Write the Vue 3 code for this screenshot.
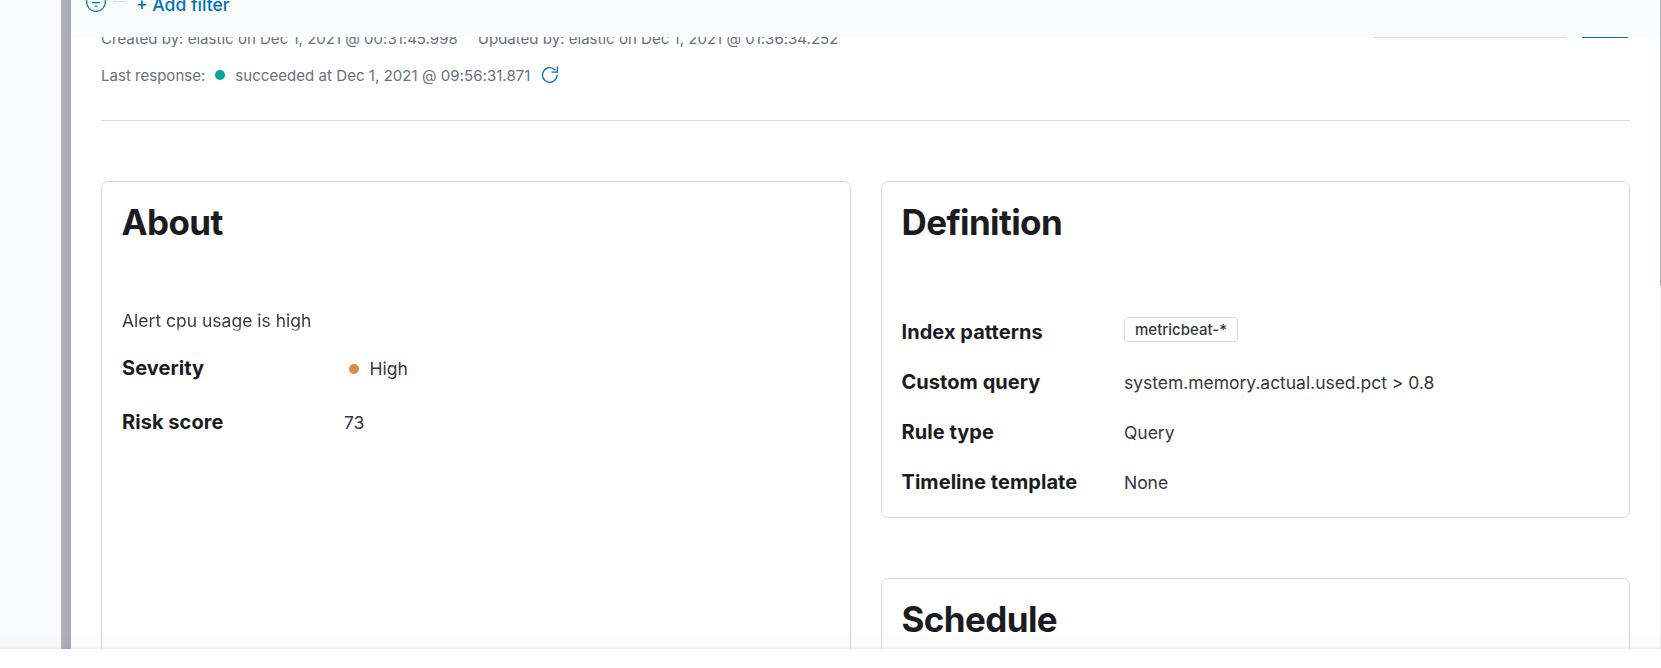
<script setup>
const about = [
  { label: 'Severity', value: 'High', dot: true },
  { label: 'Risk score', value: '73' },
]
const definition = [
  { label: 'Index patterns', value: 'metricbeat-*', badge: true },
  { label: 'Custom query', value: 'system.memory.actual.used.pct > 0.8' },
  { label: 'Rule type', value: 'Query' },
  { label: 'Timeline template', value: 'None' },
]
</script>

<template>
  <div class="app">
    <div class="body">
      <aside class="side"></aside>
      <div class="strip"></div>
      <main class="main">
        <header class="filters">
          <svg class="filter-icon" width="20" height="20" viewBox="0 0 20 20" fill="none" stroke="#0071c2" stroke-width="1.25">
            <circle cx="10" cy="10" r="9.4" />
            <path d="M4 6.8h12M6 10.5h8M8.8 14.2h2.6" />
          </svg>
          <span class="dash"></span>
          <span class="add">+ Add filter</span>
        </header>
        <section class="content">
          <div class="meta">
            <span>Created by: elastic on Dec 1, 2021 @ 00:31:45.998</span>
            <span>Updated by: elastic on Dec 1, 2021 @ 01:36:34.252</span>
            <div class="buttons">
              <i class="btn light"></i>
              <i class="btn solid"></i>
            </div>
          </div>
          <div class="status">
            <span>Last response:</span>
            <i class="dot green"></i>
            <span class="result">succeeded at Dec 1, 2021 @ 09:56:31.871</span>
            <svg class="refresh" width="18" height="18" viewBox="0 0 18 18" fill="none" stroke="#0071c2" stroke-width="1.3">
              <path d="M16.1 9A7.3 7.3 0 1 1 14.3 4.2" />
              <path d="M16.3 .5v5.7h-5.6" />
            </svg>
          </div>
          <hr class="rule" />
          <div class="columns">
            <article class="card about">
              <h3>About</h3>
              <p class="desc">Alert cpu usage is high</p>
              <dl>
                <div v-for="r in about" :key="r.label" class="row">
                  <dt>{{ r.label }}</dt>
                  <dd :class="{ health: r.dot }"><i v-if="r.dot" class="dot orange"></i>{{ r.value }}</dd>
                </div>
              </dl>
            </article>
            <div class="stack">
              <article class="card definition">
                <h3>Definition</h3>
                <dl>
                  <div v-for="r in definition" :key="r.label" class="row">
                    <dt>{{ r.label }}</dt>
                    <dd v-if="r.badge" class="badge">{{ r.value }}</dd>
                    <dd v-else>{{ r.value }}</dd>
                  </div>
                </dl>
              </article>
              <article class="card schedule">
                <h3>Schedule</h3>
              </article>
            </div>
          </div>
        </section>
      </main>
      <div class="scroll"><div class="thumb"></div></div>
      <div class="fade"></div>
    </div>
    <footer class="bottom"></footer>
  </div>
</template>

<style>
html, body { margin: 0; overflow: hidden; }
</style>

<style scoped>
.app {
  width: 100vw;
  height: 668px;
  overflow: hidden;
  background: #fff;
  color: #343741;
  font-family: Inter, sans-serif;
  font-size: 17.5px;
}
.body { position: relative; display: flex; height: 649px; overflow: hidden; }
.side { width: 61px; background: #fafbfd; flex: none; }
.strip { width: 10px; background: linear-gradient(90deg, #adb3bb, #a9acb6); flex: none; }
.main { flex: 1; min-width: 0; }
.scroll { width: 1px; background: #f0f1f3; flex: none; }
.thumb { height: 286px; background: #abadb9; }
.fade {
  position: absolute;
  inset: auto 0 0 0;
  height: 20px;
  background: linear-gradient(rgba(0, 0, 0, 0), rgba(0, 0, 0, .018) 90%, rgba(0, 0, 0, .07));
}
.bottom { height: 19px; background: #fff; }

.filters {
  position: relative;
  z-index: 1;
  display: flex;
  align-items: flex-start;
  height: 37px;
  padding-left: 15px;
  box-sizing: border-box;
  background: #fafbfd;
}
.filter-icon { margin-top: -8px; flex: none; }
.dash { width: 13px; height: 1px; margin: 1px 0 0 7px; background: #d3dae6; }
.add { margin: -8px 0 0 10px; line-height: 26px; font-weight: 500; color: #0071c2; white-space: nowrap; }

.content { padding: 0 30px; }
.meta, .status {
  display: flex;
  align-items: center;
  font-size: 15px;
  line-height: 22px;
  letter-spacing: .02px;
  color: #69707d;
  white-space: nowrap;
}
.meta { height: 22px; margin-top: -9px; gap: 20px; }
.buttons { display: flex; gap: 16px; margin: 0 2px 0 auto; align-self: flex-start; height: 10px; }
.btn { height: 10px; }
.light { width: 193px; background: #cce3f2; }
.solid { width: 46px; background: #0071c2; }
.status { height: 22px; margin-top: 15px; }
.dot { display: inline-block; width: 10px; height: 10px; border-radius: 50%; flex: none; }
.green { margin: -2px 10px 0; background: #00a69b; }
.result { letter-spacing: .05px; }
.refresh { margin: -3px 0 0 11px; }
.rule { height: 1px; margin: 33px 0 60px; border: 0; background: #d3dae6; }

.columns { display: grid; grid-template-columns: 750px 749px; column-gap: 30px; }
.card {
  box-sizing: border-box;
  padding: 20px;
  border: 1px solid #d3dae6;
  border-radius: 7px;
}
.about { height: 520px; }
.definition { height: 337px; }
.schedule { height: 200px; margin-top: 60px; }
h3 { margin: 0 0 0 -.5px; font-size: 35px; line-height: 40px; font-weight: 700; color: #1a1c21; letter-spacing: -.6px; }
dl { margin: 0; }
.desc {
  margin: 66px 0 0;
  height: 26px;
  line-height: 26px;
  background: linear-gradient(#343741 70%, rgba(52, 55, 65, .1));
  background-clip: text;
  -webkit-background-clip: text;
  color: transparent;
}
.row { display: flex; align-items: baseline; height: 30px; line-height: 30px; }
dt { width: 222px; flex: none; font-size: 20px; font-weight: 700; letter-spacing: .05px; color: #1a1c21; }
dd { margin: 0; white-space: nowrap; letter-spacing: -.03px; }
.about dl { display: grid; row-gap: 24px; margin-top: 19px; }
.definition dl { display: grid; row-gap: 20px; margin-top: 75px; }
.definition dt { text-indent: -.5px; }
.health { padding-left: 5px; }
.orange { position: relative; top: -1px; margin-right: 10.5px; background: #da8b45; }
.badge {
  align-self: flex-start;
  box-sizing: border-box;
  width: 114px;
  height: 25px;
  line-height: 23px;
  border: 1px solid #d3dae6;
  border-radius: 4px;
  text-align: center;
  font-size: 15px;
  font-weight: 500;
  letter-spacing: 0;
}
</style>
